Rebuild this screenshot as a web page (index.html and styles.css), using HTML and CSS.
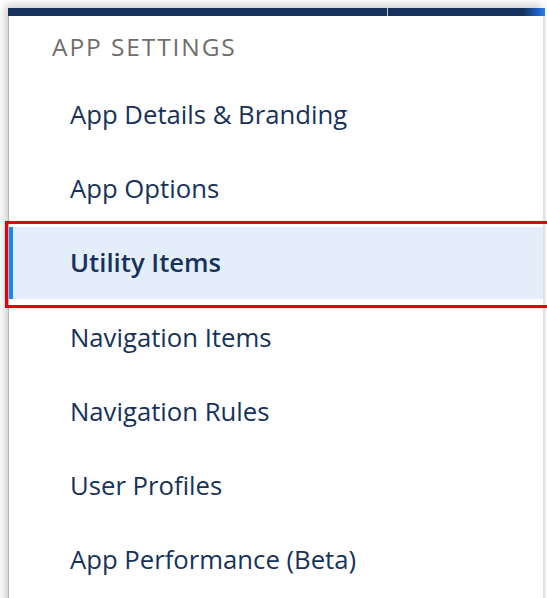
FILE: index.html
```html
<!DOCTYPE html>
<html lang="en">
<head>
<meta charset="utf-8">
<title>App Settings</title>
<link rel="stylesheet" href="styles.css">
</head>
<body>
  <div class="screen">
    <nav class="panel">
      <div class="topbar">
        <span class="topbar-seg topbar-main"></span>
        <span class="topbar-seg topbar-side"></span>
      </div>
      <h2 class="heading">APP SETTINGS</h2>
      <ul class="nav">
        <li class="nav-item"><a class="nav-link" href="#">App Details &amp; Branding</a></li>
        <li class="nav-item"><a class="nav-link" href="#">App Options</a></li>
        <li class="nav-item is-active"><a class="nav-link" href="#">Utility Items</a></li>
        <li class="nav-item"><a class="nav-link" href="#">Navigation Items</a></li>
        <li class="nav-item"><a class="nav-link" href="#">Navigation Rules</a></li>
        <li class="nav-item"><a class="nav-link" href="#">User Profiles</a></li>
        <li class="nav-item"><a class="nav-link" href="#">App Performance (Beta)</a></li>
      </ul>
    </nav>
    <span class="callout"></span>
  </div>
</body>
</html>
```

FILE: styles.css
```css
html, body {
  margin: 0;
  background: #ffffff;
}

body {
  font-family: "Open Sans", "Liberation Sans", sans-serif;
}

.screen {
  position: relative;
  height: 598px;
  padding: 8px 0 0 8px;
  box-sizing: border-box;
  overflow: hidden;
}

.panel {
  width: 537px;
  height: 600px;
  box-sizing: border-box;
  background: #ffffff;
  border-left: 1px solid #b4b7bb;
  border-right: 2px solid #dde1e7;
  box-shadow: -3px -3px 8px rgba(0, 0, 0, 0.2);
}

/* dark header strip across the top of the panel */
.topbar {
  display: flex;
  height: 8px;
  margin-left: -1px;
  margin-right: -2px;
}

.topbar-seg {
  display: block;
  height: 100%;
  background: #16325c;
}

.topbar-main {
  width: 379px;
  border-right: 1px solid #b7c3d3;
}

.topbar-side {
  flex: 1;
  background: linear-gradient(to right, #16325c 0%, #16325c 86%, #1c5fc0 95%, #2b7de9 100%);
}

.heading {
  margin: 0;
  height: 61px;
  display: flex;
  align-items: center;
  padding-left: 43px;
  font-size: 24.5px;
  font-weight: 400;
  letter-spacing: 1.9px;
  color: #6f6e6c;
}

.nav {
  list-style: none;
  margin: 0;
  padding: 0;
}

.nav-item {
  height: 74.3px;
  display: flex;
  align-items: center;
}

.nav-link {
  padding-left: 61px;
  font-size: 25.7px;
  color: #16325c;
  text-decoration: none;
}

.nav-item.is-active {
  box-sizing: border-box;
  border-top: 1px solid #ffffff;
  border-bottom: 1px solid #ffffff;
  background: #e3eefa;
  box-shadow: inset 4px 0 0 #1589ee;
}

.nav-item.is-active .nav-link {
  font-weight: 600;
}

/* red outline drawn around the selected entry */
.callout {
  position: absolute;
  top: 221px;
  left: 5px;
  width: 560px;
  height: 87px;
  box-sizing: border-box;
  border: 3px solid #e3020c;
  box-shadow: 0 0 1px rgba(90, 0, 0, 0.35);
  pointer-events: none;
}
```
